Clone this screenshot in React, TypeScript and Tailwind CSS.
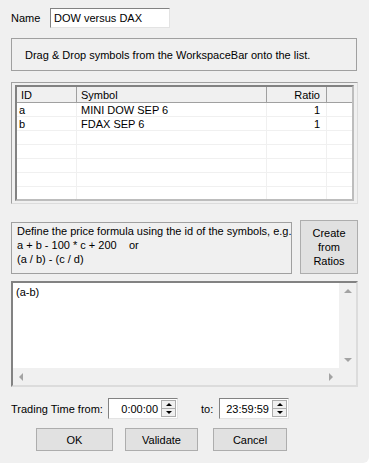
import React from "react";

type Row = { id: string; symbol: string; ratio: string };

const rows: Row[] = [
  { id: "a", symbol: "MINI DOW SEP 6", ratio: "1" },
  { id: "b", symbol: "FDAX SEP 6", ratio: "1" },
  { id: "", symbol: "", ratio: "" },
  { id: "", symbol: "", ratio: "" },
  { id: "", symbol: "", ratio: "" },
  { id: "", symbol: "", ratio: "" },
  { id: "", symbol: "", ratio: "" },
];

function Spinner({ value, width }: { value: string; width: string }) {
  return (
    <div className={`flex h-[21px] border border-t-[#828282] border-l-[#828282] border-r-[#e3e3e3] border-b-[#e3e3e3] bg-white ${width}`}>
      <div className="flex-1 flex items-center justify-end pr-[2px]">{value}</div>
      <div className="w-[17px] flex flex-col p-[1px] gap-0">
        <div className="flex-1 bg-[#f0f0f0] border border-[#acacac] flex items-center justify-center">
          <span className="block w-0 h-0 border-l-[3px] border-r-[3px] border-b-[3px] border-l-transparent border-r-transparent border-b-black"></span>
        </div>
        <div className="flex-1 bg-[#f0f0f0] border border-[#acacac] border-t-0 flex items-center justify-center">
          <span className="block w-0 h-0 border-l-[3px] border-r-[3px] border-t-[3px] border-l-transparent border-r-transparent border-t-black"></span>
        </div>
      </div>
    </div>
  );
}

function Button({ label, width }: { label: string; width: string }) {
  return (
    <button className={`h-[23px] ${width} bg-[#e1e1e1] border border-[#adadad] text-black text-[11px]`}>
      {label}
    </button>
  );
}

export default function App() {
  return (
    <div className="w-[369px] h-[463px] bg-[#f0f0f0] px-[11px] text-[11px] text-black leading-[14px] font-['Liberation_Sans',Arial,sans-serif] rounded-br-[6px] overflow-hidden">
      <div className="pt-[8px] flex items-center">
        <span className="w-[39px]">Name</span>
        <div className="w-[120px] h-[20px] bg-white border border-t-[#828282] border-l-[#828282] border-r-[#e3e3e3] border-b-[#e3e3e3] flex items-center pl-[3px]">
          DOW versus DAX
        </div>
      </div>

      <div className="mt-[10px] h-[33px] w-[346px] border border-[#a0a0a0] flex items-center pl-[13px]">
        Drag &amp; Drop symbols from the WorkspaceBar onto the list.
      </div>

      <div className="mt-[11px] h-[122px] w-[347px] border border-[#a0a0a0] border-r-[#dcdcdc] border-b-[#dcdcdc] pl-[3px] pt-[2px]">
        <div className="w-[339px] h-[116px] border-2 border-t-[#828282] border-l-[#828282] border-r-[#bdbdbd] border-b-[#bdbdbd] bg-white overflow-hidden">
          <div className="flex h-[16px] bg-[#f0f0f0] border-b border-[#a0a0a0]">
            <div className="w-[60px] pl-[4px] border-r border-[#a0a0a0] flex items-center">ID</div>
            <div className="w-[190px] pl-[4px] border-r border-[#a0a0a0] flex items-center">Symbol</div>
            <div className="w-[60px] pr-[6px] border-r border-[#a0a0a0] flex items-center justify-end">Ratio</div>
            <div className="flex-1"></div>
          </div>
          {rows.map((r, i) => (
            <div key={i} className="flex h-[14px] border-b border-[#f0f0f0]">
              <div className="w-[60px] pl-[2px] border-r border-[#f0f0f0]">{r.id}</div>
              <div className="w-[190px] pl-[4px] border-r border-[#f0f0f0]">{r.symbol}</div>
              <div className="w-[60px] pr-[6px] border-r border-[#f0f0f0] text-right">{r.ratio}</div>
              <div className="flex-1"></div>
            </div>
          ))}
        </div>
      </div>

      <div className="mt-[16px] flex items-start gap-[8px]">
        <div className="mt-[2px] w-[281px] h-[52px] border border-[#a0a0a0] pl-[5px] pt-[1px] whitespace-pre">
          <div>Define the price formula using the id of the symbols, e.g.</div>
          <div>{"a + b - 100 * c + 200    or"}</div>
          <div>{"(a / b) - (c / d)"}</div>
        </div>
        <button className="w-[59px] h-[54px] bg-[#e1e1e1] border border-[#adadad] text-[11px] leading-[14px] text-center">
          Create
          <br />
          from
          <br />
          Ratios
        </button>
      </div>

      <div className="mt-[7px] w-[347px] h-[106px] border-2 border-t-[#828282] border-l-[#828282] border-r-[#dcdcdc] border-b-[#dcdcdc] bg-white flex flex-col">
        <div className="flex flex-1">
          <div className="flex-1 pl-[3px] pt-[2px]">(a-b)</div>
          <div className="w-[17px] bg-[#f0f0f0] flex flex-col items-center justify-between py-[6px]">
            <span className="block w-0 h-0 border-l-[4px] border-r-[4px] border-b-[4px] border-l-transparent border-r-transparent border-b-[#a3a3a3]"></span>
            <span className="block w-0 h-0 border-l-[4px] border-r-[4px] border-t-[4px] border-l-transparent border-r-transparent border-t-[#a3a3a3]"></span>
          </div>
        </div>
        <div className="flex h-[17px]">
          <div className="flex-1 bg-[#f0f0f0] flex items-center justify-between px-[6px]">
            <span className="block w-0 h-0 border-t-[4px] border-b-[4px] border-r-[4px] border-t-transparent border-b-transparent border-r-[#a3a3a3]"></span>
            <span className="block w-0 h-0 border-t-[4px] border-b-[4px] border-l-[4px] border-t-transparent border-b-transparent border-l-[#a3a3a3]"></span>
          </div>
          <div className="w-[17px] bg-[#f0f0f0]"></div>
        </div>
      </div>

      <div className="mt-[11px] flex items-center">
        <span className="w-[97px]">Trading Time from:</span>
        <Spinner value="0:00:00" width="w-[70px]" />
        <span className="ml-[23px] w-[18px]">to:</span>
        <Spinner value="23:59:59" width="w-[70px]" />
      </div>

      <div className="mt-[9px] flex pl-[25px]">
        <Button label="OK" width="w-[77px]" />
        <div className="ml-[12px]">
          <Button label="Validate" width="w-[73px]" />
        </div>
        <div className="ml-[15px]">
          <Button label="Cancel" width="w-[74px]" />
        </div>
      </div>
    </div>
  );
}
